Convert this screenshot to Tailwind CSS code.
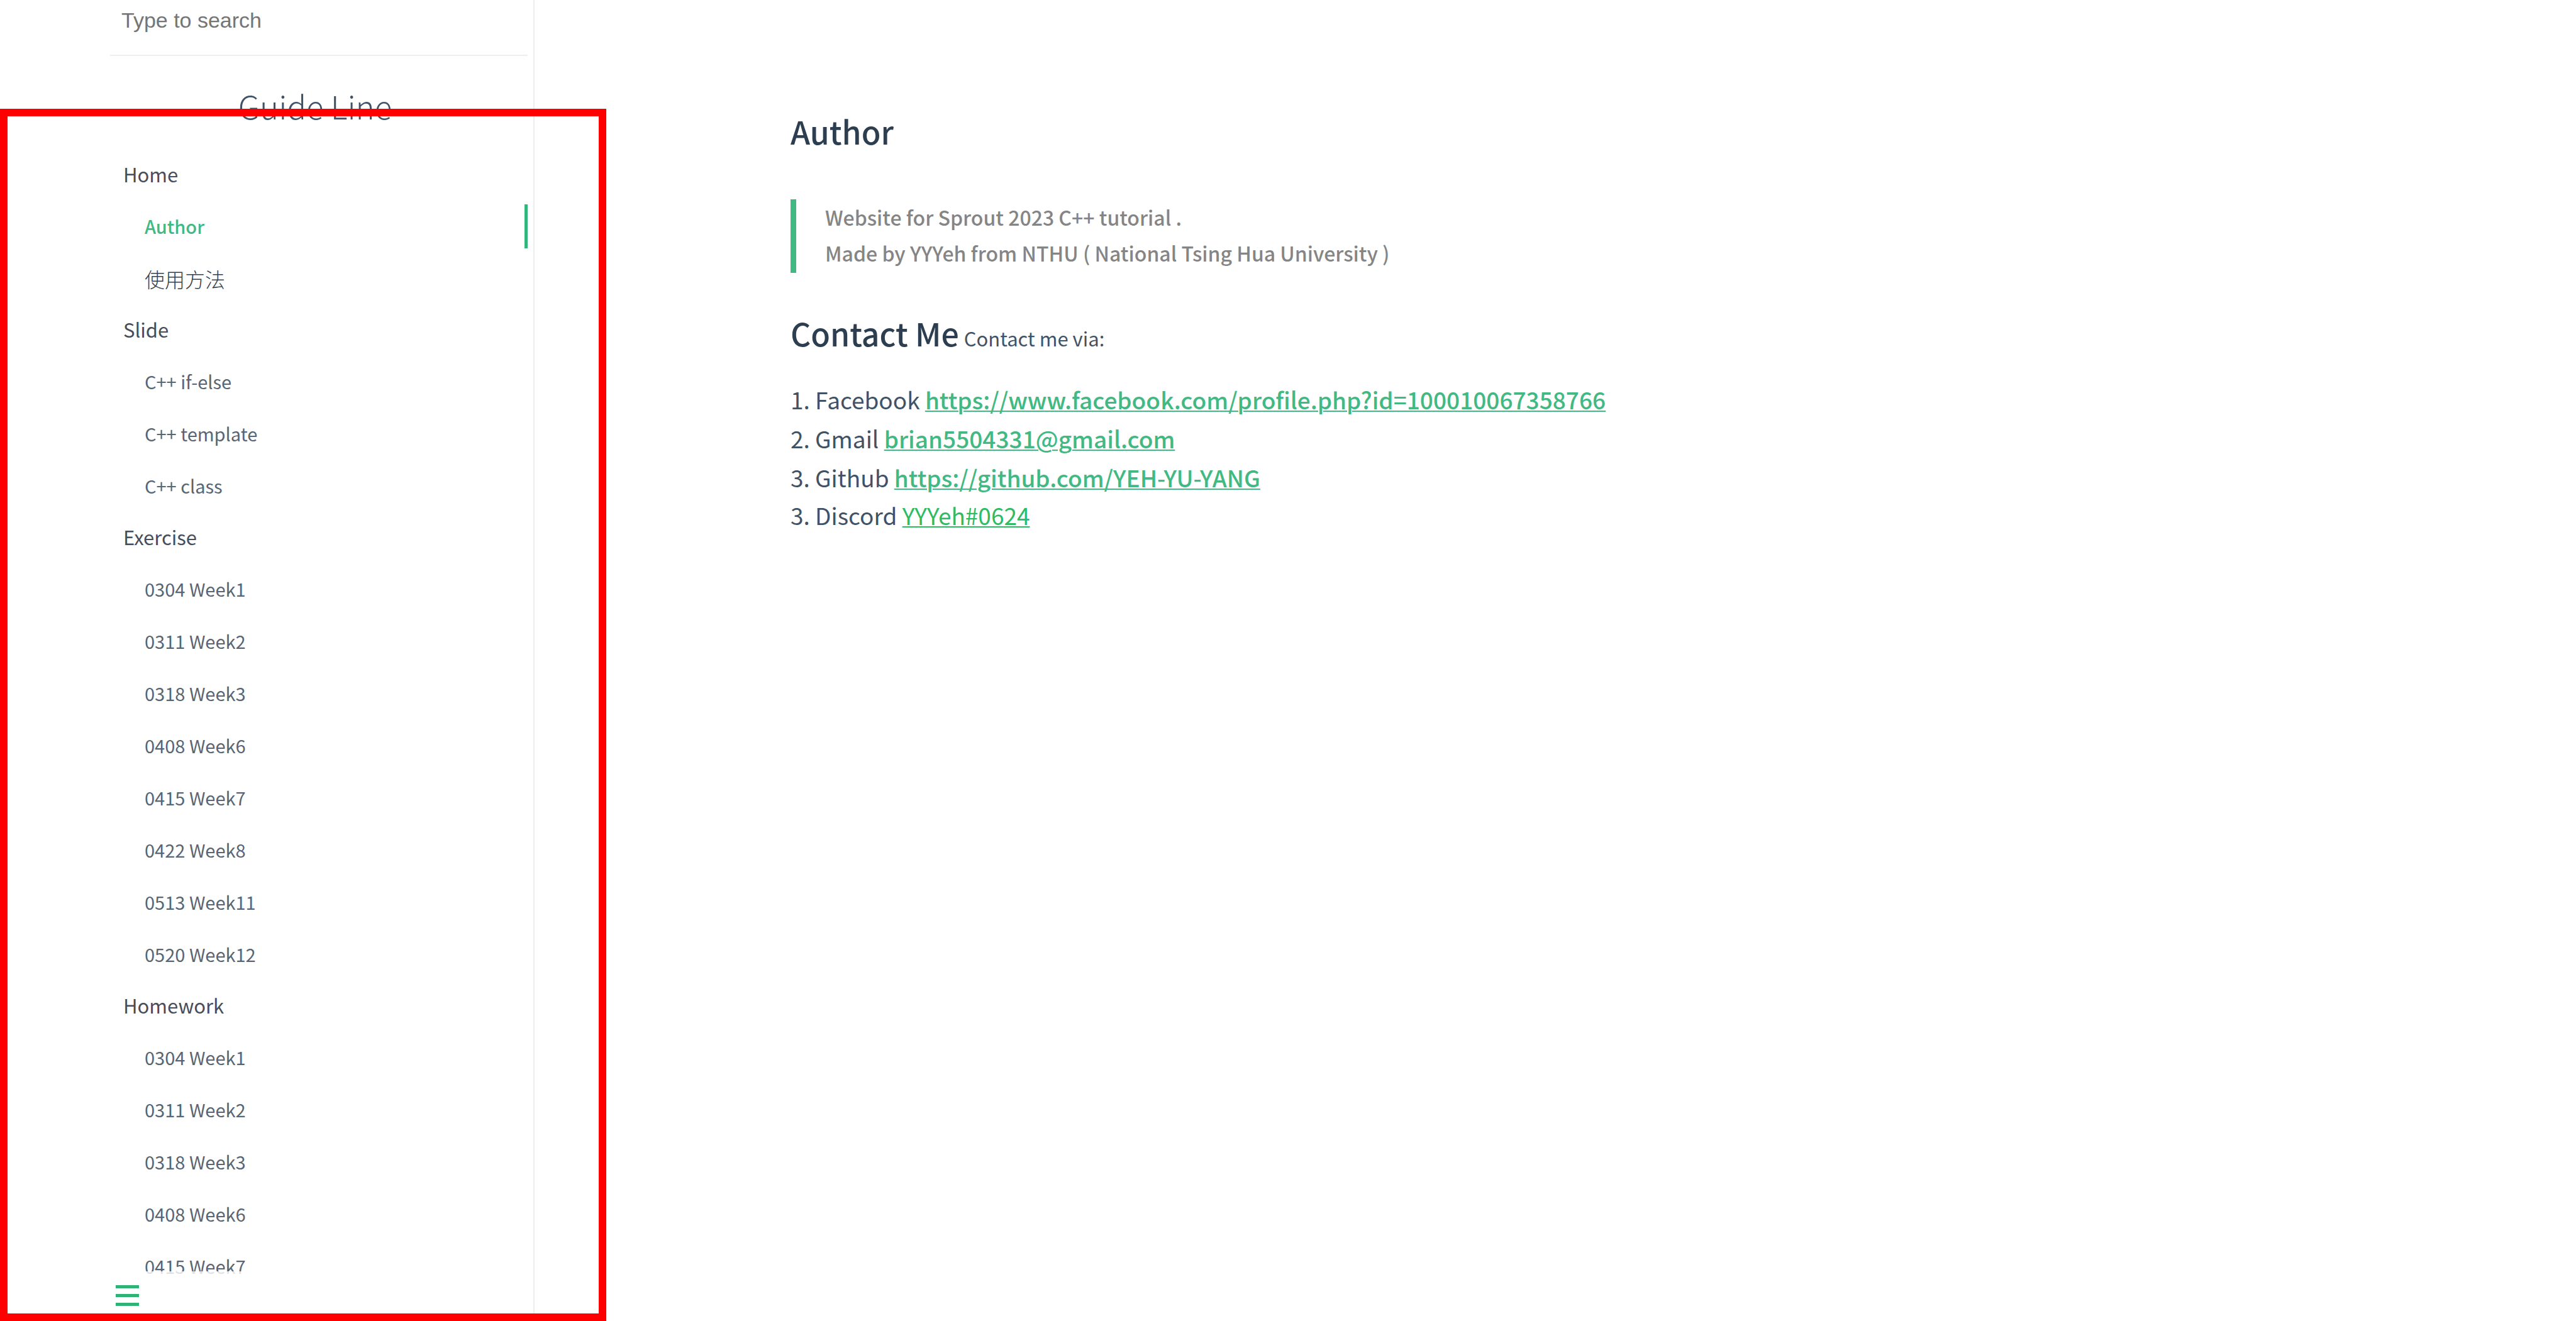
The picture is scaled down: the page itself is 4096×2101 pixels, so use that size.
<!DOCTYPE html>
<html lang="zh-Hant">
<head>
<meta charset="utf-8">
<meta name="viewport" content="width=device-width, initial-scale=1">
<title>Guide Line</title>
<script src="https://cdn.jsdelivr.net/npm/@tailwindcss/browser@4"></script>
</head>
<body class="relative flex h-screen overflow-hidden bg-white font-['Noto_Sans_CJK_TC',sans-serif] text-[#3f5266]">

<!-- Sidebar -->
<aside class="relative h-full w-[850px] shrink-0 overflow-hidden border-r-2 border-black/7 pr-[9px] pl-[175px]">
  <form class="h-[89px] border-b-2 border-[#eee]" role="search">
    <input type="search" aria-label="Type to search" placeholder="Type to search" class="h-16 w-full bg-transparent px-[18px] font-['Liberation_Sans',sans-serif] text-[34px] text-[#34495e] outline-none placeholder:text-[#757575] placeholder:opacity-100">
  </form>

  <h1 class="mt-11 mb-[34px] pr-3 text-center text-[51px] leading-[70px] font-light"><a href="#/">Guide Line</a></h1>

  <nav aria-label="Pages" class="text-[29px] text-[#586572]">
    <section>
      <h2 class="flex h-[81px] items-center pl-[21px] text-[31px] text-[#474d5a]">Home</h2>
      <ul>
        <li class="flex h-[83px] items-center"><a href="#/author" aria-current="page" class="flex h-[70px] flex-1 items-center border-r-5 border-[#32b67a] pl-[55px] font-medium text-[#42b983]">Author</a></li>
        <li class="flex h-[83px] items-center"><a href="#/usage" class="flex-1 pl-[55px] text-[32px] font-light text-[#36424e]">使用方法</a></li>
      </ul>
    </section>
    <section>
      <h2 class="flex h-[81px] items-center pl-[21px] text-[31px] text-[#474d5a]">Slide</h2>
      <ul>
        <li class="flex h-[83px] items-center"><a href="#/slide/if-else" class="flex-1 pl-[55px]">C++ if-else</a></li>
        <li class="flex h-[83px] items-center"><a href="#/slide/template" class="flex-1 pl-[55px]">C++ template</a></li>
        <li class="flex h-[83px] items-center"><a href="#/slide/class" class="flex-1 pl-[55px]">C++ class</a></li>
      </ul>
    </section>
    <section>
      <h2 class="flex h-[81px] items-center pl-[21px] text-[31px] text-[#474d5a]">Exercise</h2>
      <ul>
        <li class="flex h-[83px] items-center"><a href="#/exercise/0304" class="flex-1 pl-[55px]">0304 Week1</a></li>
        <li class="flex h-[83px] items-center"><a href="#/exercise/0311" class="flex-1 pl-[55px]">0311 Week2</a></li>
        <li class="flex h-[83px] items-center"><a href="#/exercise/0318" class="flex-1 pl-[55px]">0318 Week3</a></li>
        <li class="flex h-[83px] items-center"><a href="#/exercise/0408" class="flex-1 pl-[55px]">0408 Week6</a></li>
        <li class="flex h-[83px] items-center"><a href="#/exercise/0415" class="flex-1 pl-[55px]">0415 Week7</a></li>
        <li class="flex h-[83px] items-center"><a href="#/exercise/0422" class="flex-1 pl-[55px]">0422 Week8</a></li>
        <li class="flex h-[83px] items-center"><a href="#/exercise/0513" class="flex-1 pl-[55px]">0513 Week11</a></li>
        <li class="flex h-[83px] items-center"><a href="#/exercise/0520" class="flex-1 pl-[55px]">0520 Week12</a></li>
      </ul>
    </section>
    <section>
      <h2 class="flex h-[81px] items-center pl-[21px] text-[31px] text-[#474d5a]">Homework</h2>
      <ul>
        <li class="flex h-[83px] items-center"><a href="#/homework/0304" class="flex-1 pl-[55px]">0304 Week1</a></li>
        <li class="flex h-[83px] items-center"><a href="#/homework/0311" class="flex-1 pl-[55px]">0311 Week2</a></li>
        <li class="flex h-[83px] items-center"><a href="#/homework/0318" class="flex-1 pl-[55px]">0318 Week3</a></li>
        <li class="flex h-[83px] items-center"><a href="#/homework/0408" class="flex-1 pl-[55px]">0408 Week6</a></li>
        <li class="flex h-[83px] items-center"><a href="#/homework/0415" class="flex-1 pl-[55px]">0415 Week7</a></li>
      </ul>
    </section>
  </nav>

  <!-- Sidebar toggle, floating over the end of the list -->
  <button type="button" aria-label="Toggle sidebar" class="absolute bottom-0 left-[160px] flex h-[79px] w-[640px] flex-col gap-[9px] bg-white/80 pt-[22px] pl-6">
    <span class="h-[5px] w-[37px] bg-[#2fb375]"></span>
    <span class="h-[5px] w-[37px] bg-[#2fb375]"></span>
    <span class="h-[5px] w-[37px] bg-[#2fb375]"></span>
  </button>
</aside>

<!-- Content -->
<main class="min-w-0 flex-1 pt-[172px] pl-[407px]">
  <h2 class="text-[50px] leading-[72px] font-medium text-[#2c3e50]">Author</h2>
  <blockquote class="mt-[73px] border-l-9 border-[#42b983] pb-[3px] pl-[46px] text-[32px] leading-[57px] font-medium text-[#858585]">
    <p>Website for Sprout 2023 C++ tutorial .</p>
    <p>Made by YYYeh from NTHU ( National Tsing Hua University )</p>
  </blockquote>
  <div class="mt-[59px] flex items-baseline gap-2 text-[31px] leading-[72px]">
    <h2 class="text-[50px] leading-[72px] font-medium text-[#2c3e50]">Contact Me</h2>
    <p>Contact me via:</p>
  </div>
  <ul class="mt-[30px] text-[37px] leading-[62px]">
    <li>1. Facebook <a href="https://www.facebook.com/profile.php?id=100010067358766" class="font-medium text-[#42b983] underline decoration-2 underline-offset-2">https://www.facebook.com/profile.php?id=100010067358766</a></li>
    <li>2. Gmail <a href="mailto:brian5504331@gmail.com" class="font-medium text-[#42b983] underline decoration-2 underline-offset-2">brian5504331@gmail.com</a></li>
    <li>3. Github <a href="https://github.com/YEH-YU-YANG" class="font-medium text-[#42b983] underline decoration-2 underline-offset-2">https://github.com/YEH-YU-YANG</a></li>
    <li class="leading-[58px]">3. Discord <a href="#/discord" class="text-[#2dbb64] underline decoration-2 underline-offset-2">YYYeh#0624</a></li>
  </ul>
</main>

<!-- Highlight frame drawn over the sidebar -->
<div class="pointer-events-none absolute top-[173px] bottom-0 left-0 w-[964px] border-12 border-[#f00]"></div>
</body>
</html>
